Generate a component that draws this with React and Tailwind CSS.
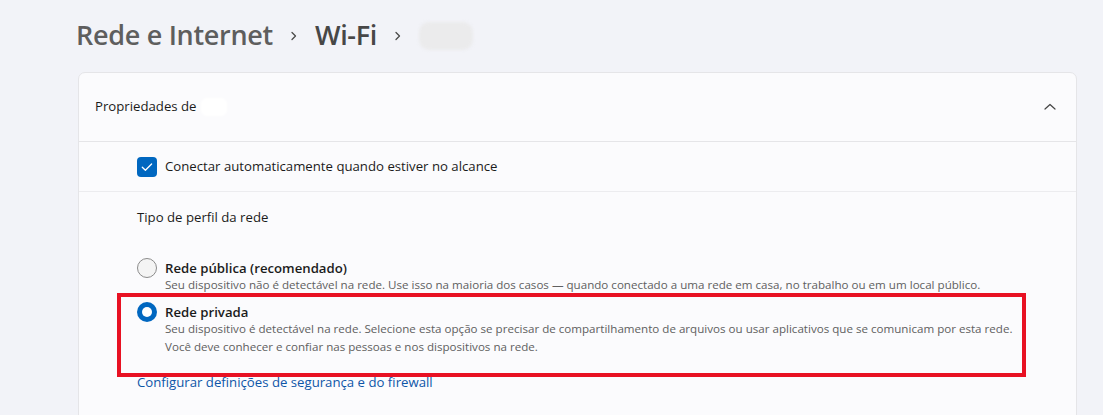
const ChevronRight = () => (
    <svg width="12" height="12" viewBox="0 0 12 12" className="mx-[15px]">
        <path d="M4 2.5 L7.5 6 L4 9.5" fill="none" stroke="#4a4a4a" strokeWidth="1.3" strokeLinecap="round" strokeLinejoin="round" />
    </svg>
);

const RadioOption = ({ checked, title, children }) => (
    <div className="flex items-start gap-2">
        {checked ? (
            <span className="-mt-[2px] flex h-5 w-5 shrink-0 items-center justify-center rounded-full bg-[#0067c0]">
                <span className="h-[10px] w-[10px] rounded-full bg-white" />
            </span>
        ) : (
            <span className="-mt-[2px] h-5 w-5 shrink-0 rounded-full border border-[#8b8b8b] bg-[#f4f4f4]" />
        )}
        <div className="flex flex-col">
            <span className="text-[13.2px] leading-[16px] font-semibold text-[#1b1b1b]">{title}</span>
            <div className="text-[11.6px] leading-[18px] text-[#606060]">{children}</div>
        </div>
    </div>
);

export default function App() {
    return (
        <div className="relative h-[415px] w-full overflow-hidden bg-[#f2f3f8] font-['Open_Sans',sans-serif]">
            <div className="flex h-[72px] items-center pl-[76px] pb-[1px] text-[27px] font-semibold tracking-[-0.3px]">
                <span className="text-[#5e5e5e]">Rede e Internet</span>
                <ChevronRight />
                <span className="text-[#474747]">Wi-Fi</span>
                <ChevronRight />
                <span className="h-[28px] w-[54px] rounded-[10px] bg-[#ebebec] blur-[1.5px]" />
            </div>

            <div className="ml-[78px] w-[999px] rounded-t-[7px] border border-[#e5e5e8] bg-[#fbfbfd]">
                <div className="flex h-[69px] items-center justify-between border-b border-[#e5e5e8] pl-[16px] pr-[19px]">
                    <div className="flex items-center text-[13.2px] text-[#1b1b1b]">
                        <span>Propriedades de</span>
                        <span className="ml-[4px] h-[18px] w-[26px] rounded-md bg-white blur-[1px]" />
                    </div>
                    <svg width="14" height="10" viewBox="0 0 14 10">
                        <path d="M2 7 L7 2.5 L12 7" fill="none" stroke="#444" strokeWidth="1.2" strokeLinecap="round" strokeLinejoin="round" />
                    </svg>
                </div>

                <div className="flex h-[50px] items-center gap-2 border-b border-[#ececef] pl-[58px]">
                    <span className="flex h-5 w-5 items-center justify-center rounded-[4px] bg-[#0067c0]">
                        <svg width="14" height="14" viewBox="0 0 14 14">
                            <path d="M2.3 7.2 L5.4 10.2 L11.6 4" fill="none" stroke="white" strokeWidth="1.3" strokeLinecap="round" strokeLinejoin="round" />
                        </svg>
                    </span>
                    <span className="text-[13.2px] text-[#1b1b1b]">Conectar automaticamente quando estiver no alcance</span>
                </div>

                <div className="flex flex-col pl-[58px] pt-[14px]">
                    <span className="text-[13.2px] leading-[22px] text-[#1b1b1b]">Tipo de perfil da rede</span>
                    <div className="mt-[32px] flex flex-col gap-[10px]">
                        <RadioOption title="Rede pública (recomendado)">
                            <p>Seu dispositivo não é detectável na rede. Use isso na maioria dos casos — quando conectado a uma rede em casa, no trabalho ou em um local público.</p>
                        </RadioOption>
                        <RadioOption checked title="Rede privada">
                            <p>Seu dispositivo é detectável na rede. Selecione esta opção se precisar de compartilhamento de arquivos ou usar aplicativos que se comunicam por esta rede.</p>
                            <p>Você deve conhecer e confiar nas pessoas e nos dispositivos na rede.</p>
                        </RadioOption>
                    </div>
                    <a className="mt-[15px] text-[13.2px] leading-[22px] text-[#0e56a8]">Configurar definições de segurança e do firewall</a>
                    <div className="h-[60px]" />
                </div>
            </div>

            <div className="absolute left-[117px] top-[293px] h-[84px] w-[909px] border-4 border-[#e81123]" />
        </div>
    );
}
